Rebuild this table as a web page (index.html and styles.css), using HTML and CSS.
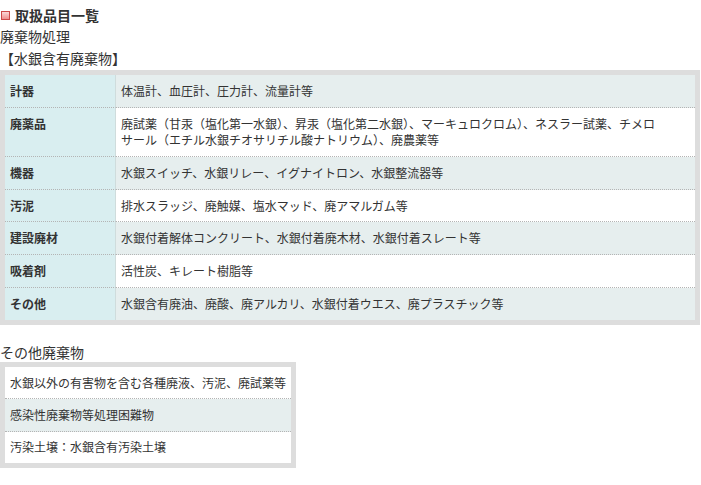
FILE: index.html
```html
<!DOCTYPE html>
<html lang="ja">
<head>
<meta charset="utf-8">
<title>取扱品目一覧</title>
<link rel="stylesheet" href="styles.css">
</head>
<body>
<h2 class="title"><span class="title-icon"></span>取扱品目一覧</h2>
<p class="section">廃棄物処理</p>
<p class="subsection">【水銀含有廃棄物】</p>
<table class="items">
  <tr class="shade"><th>計器</th><td>体温計、血圧計、圧力計、流量計等</td></tr>
  <tr><th>廃薬品</th><td>廃試薬（甘汞（塩化第一水銀）、昇汞（塩化第二水銀）、マーキュロクロム）、ネスラー試薬、チメロ<br>サール（エチル水銀チオサリチル酸ナトリウム）、廃農薬等</td></tr>
  <tr class="shade"><th>機器</th><td>水銀スイッチ、水銀リレー、イグナイトロン、水銀整流器等</td></tr>
  <tr><th>汚泥</th><td>排水スラッジ、廃触媒、塩水マッド、廃アマルガム等</td></tr>
  <tr class="shade"><th>建設廃材</th><td>水銀付着解体コンクリート、水銀付着廃木材、水銀付着スレート等</td></tr>
  <tr><th>吸着剤</th><td>活性炭、キレート樹脂等</td></tr>
  <tr class="shade"><th>その他</th><td>水銀含有廃油、廃酸、廃アルカリ、水銀付着ウエス、廃プラスチック等</td></tr>
</table>
<p class="section other">その他廃棄物</p>
<table class="others">
  <tr><td>水銀以外の有害物を含む各種廃液、汚泥、廃試薬等</td></tr>
  <tr class="shade"><td>感染性廃棄物等処理困難物</td></tr>
  <tr><td>汚染土壌：水銀含有汚染土壌</td></tr>
</table>
</body>
</html>
```

FILE: styles.css
```css
html, body {
  margin: 0;
  padding: 0;
  background: #fff;
}
body {
  font-family: "Noto Sans CJK JP", "Noto Sans", sans-serif;
  color: #333;
  font-size: 14px;
  padding-top: 4px;
}
.title {
  margin: 0;
  font-size: 14px;
  line-height: 22px;
  font-weight: bold;
  display: flex;
  align-items: center;
  gap: 5px;
}
.title-icon {
  flex: 0 0 9px;
  display: block;
  box-sizing: border-box;
  width: 9px;
  height: 9px;
  margin-left: 1px;
  border: 1px solid #cc4a4a;
  background: linear-gradient(#fbd9d9, #ee8f8f);
}
.section {
  margin: 0;
  font-size: 14px;
  line-height: 20px;
}
.subsection {
  margin: 2px 0 2px 0;
  font-size: 14px;
  line-height: 20px;
}
table {
  border-collapse: separate;
  border-spacing: 0;
  border: 5px solid #dddddd;
  font-size: 12px;
  line-height: 16px;
}
.items {
  width: 700px;
  box-sizing: border-box;
}
.items th,
.items td {
  padding: 8px 5px 7.85px;
  text-align: left;
  vertical-align: top;
  border-bottom: 1px dotted #b4b4b4;
}
.items tr:last-child th,
.items tr:last-child td {
  border-bottom: none;
}
.items th {
  box-sizing: border-box;
  width: 111px;
  font-weight: bold;
  background: #d9eef0;
  border-right: 1px solid #cfdcdc;
}
.items td {
  background: #fff;
}
.items tr.shade td {
  background: #e6eeee;
}
.other {
  margin-top: 17px;
}
.others td {
  padding: 7.7px 5px;
  background: #fff;
  border-bottom: 1px dotted #b4b4b4;
}
.others tr:last-child td {
  border-bottom: none;
}
.others tr.shade td {
  background: #e6eeee;
}
```
